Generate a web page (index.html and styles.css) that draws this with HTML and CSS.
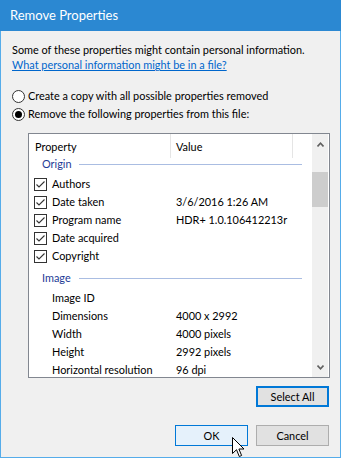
FILE: index.html
```html
<!DOCTYPE html>
<html lang="en">
<head>
<meta charset="utf-8">
<title>Remove Properties</title>
<link rel="stylesheet" href="styles.css">
</head>
<body>
<div class="window">
  <div class="titlebar">Remove Properties</div>
  <div class="content">
    <p class="intro">Some of these properties might contain personal information.</p>
    <a class="link" href="#">What personal information might be in a file?</a>
    <div class="options">
      <div class="radio-row"><span class="radio"></span><span>Create a copy with all possible properties removed</span></div>
      <div class="radio-row"><span class="radio"><span class="dot"></span></span><span>Remove the following properties from this file:</span></div>
    </div>
    <div class="listbox">
      <div class="list-main">
        <div class="list-header">
          <div class="col col-prop">Property</div>
          <div class="col col-val">Value</div>
          <div class="col col-fill"></div>
        </div>
        <div class="group group-first"><span class="group-name">Origin</span><span class="group-line"></span></div>
        <div class="row"><span class="cb"><svg viewBox="0 0 11 11" width="11" height="11"><polyline points="1.5,5.5 4,8 9.5,2.5" /></svg></span><span class="name">Authors</span><span class="val"></span></div>
        <div class="row"><span class="cb"><svg viewBox="0 0 11 11" width="11" height="11"><polyline points="1.5,5.5 4,8 9.5,2.5" /></svg></span><span class="name">Date taken</span><span class="val">3/6/2016 1:26 AM</span></div>
        <div class="row"><span class="cb"><svg viewBox="0 0 11 11" width="11" height="11"><polyline points="1.5,5.5 4,8 9.5,2.5" /></svg></span><span class="name">Program name</span><span class="val">HDR+ 1.0.106412213r</span></div>
        <div class="row"><span class="cb"><svg viewBox="0 0 11 11" width="11" height="11"><polyline points="1.5,5.5 4,8 9.5,2.5" /></svg></span><span class="name">Date acquired</span><span class="val"></span></div>
        <div class="row"><span class="cb"><svg viewBox="0 0 11 11" width="11" height="11"><polyline points="1.5,5.5 4,8 9.5,2.5" /></svg></span><span class="name">Copyright</span><span class="val"></span></div>
        <div class="group group-next"><span class="group-name">Image</span><span class="group-line"></span></div>
        <div class="row"><span class="cb-space"></span><span class="name">Image ID</span><span class="val"></span></div>
        <div class="row"><span class="cb-space"></span><span class="name">Dimensions</span><span class="val">4000 x 2992</span></div>
        <div class="row"><span class="cb-space"></span><span class="name">Width</span><span class="val">4000 pixels</span></div>
        <div class="row"><span class="cb-space"></span><span class="name">Height</span><span class="val">2992 pixels</span></div>
        <div class="row"><span class="cb-space"></span><span class="name">Horizontal resolution</span><span class="val">96 dpi</span></div>
      </div>
      <div class="scrollbar">
        <div class="arrow arrow-up"><svg viewBox="0 0 7 5" width="7" height="5"><polyline points="0.5,4.5 3.5,1.2 6.5,4.5" /></svg></div>
        <div class="track"><div class="thumb"></div></div>
        <div class="arrow arrow-down"><svg viewBox="0 0 7 5" width="7" height="5"><polyline points="0.5,0.5 3.5,3.8 6.5,0.5" /></svg></div>
      </div>
    </div>
    <div class="select-row"><button class="btn btn-default" type="button">Select All</button></div>
    <div class="actions">
      <button class="btn btn-hover" type="button">OK</button>
      <button class="btn" type="button">Cancel</button>
    </div>
  </div>
  <svg class="cursor" viewBox="0 0 13 21" width="13" height="21"><path d="M0.5 0.5 V16.5 L4.5 12.7 L7.3 19.5 L9.6 18.5 L6.9 12 H12 Z" /></svg>
</div>
</body>
</html>
```
FILE: styles.css
```css
body {
  margin: 0;
  background: #ffffff;
  font-family: Lato, "Liberation Sans", sans-serif;
  font-size: 10.9px;
  color: #000000;
}

.window {
  position: relative;
  width: 341px;
  height: 458px;
  box-sizing: border-box;
  border: 1px solid #55acea;
  border-top: 0;
  background: #f0f0f0;
  display: flex;
  flex-direction: column;
}

.titlebar {
  height: 31px;
  margin: 0 -1px;
  padding-left: 10px;
  background: #2b88d2;
  color: #ffffff;
  font-size: 13px;
  line-height: 30px;
}

.content {
  padding: 11px 11px 11px 11px;
  display: flex;
  flex-direction: column;
}

.intro {
  margin: 0;
  line-height: 15px;
}

.link {
  display: block;
  line-height: 15px;
  color: #0066cc;
  text-decoration: underline;
}

.options {
  margin-top: 15px;
}

.radio-row {
  display: flex;
  align-items: center;
  gap: 3px;
  height: 18px;
  line-height: 18px;
}

.radio {
  width: 13px;
  height: 13px;
  box-sizing: border-box;
  border: 1px solid #333333;
  border-radius: 50%;
  background: #ffffff;
  display: flex;
  align-items: center;
  justify-content: center;
}

.dot {
  width: 7px;
  height: 7px;
  border-radius: 50%;
  background: #000000;
}

.listbox {
  margin-top: 10px;
  margin-left: 16px;
  width: 302px;
  height: 245px;
  box-sizing: border-box;
  border: 1px solid #828790;
  background: #ffffff;
  display: flex;
}

.list-main {
  width: 283px;
  flex: none;
  overflow: hidden;
}

.list-header {
  display: flex;
  height: 24px;
}

.col {
  box-sizing: border-box;
  padding-top: 2px;
  line-height: 22px;
  border-right: 1px solid #e5e5e5;
  white-space: nowrap;
}

.col-prop {
  width: 142px;
  padding-left: 6px;
}

.col-val {
  width: 122px;
  padding-left: 5px;
}

.col-fill {
  flex: 1;
  border-right: 0;
}

.group {
  display: flex;
  align-items: center;
  height: 12px;
  line-height: 12px;
  padding-left: 13px;
  color: #1e3b96;
}

.group-first {
  padding-bottom: 5px;
}

.group-next {
  padding-top: 7px;
  padding-bottom: 5px;
}

.group-name {
  width: 37px;
  flex: none;
}

.group-line {
  flex: 1;
  height: 1px;
  margin-right: 10px;
  background: #aabde2;
}

.row {
  display: flex;
  align-items: center;
  height: 18px;
  line-height: 18px;
  padding-left: 5px;
  white-space: nowrap;
}

.cb {
  width: 13px;
  height: 13px;
  flex: none;
  box-sizing: border-box;
  border: 1px solid #333333;
  background: #ffffff;
  margin-right: 5px;
  display: flex;
}

.cb svg polyline {
  fill: none;
  stroke: #333333;
  stroke-width: 1.1;
}

.cb-space {
  width: 13px;
  height: 13px;
  flex: none;
  margin-right: 5px;
}

.name {
  width: 124px;
  flex: none;
}

.scrollbar {
  width: 16px;
  flex: none;
  background: #f0f0f0;
  display: flex;
  flex-direction: column;
}

.arrow {
  height: 20px;
  display: flex;
  align-items: center;
  justify-content: center;
}

.arrow svg polyline {
  fill: none;
  stroke: #606060;
  stroke-width: 1.6;
}

.track {
  flex: 1;
}

.thumb {
  margin-top: 18px;
  height: 35px;
  background: #cdcdcd;
}

.select-row {
  display: flex;
  justify-content: flex-end;
  margin-top: 8px;
}

.actions {
  display: flex;
  justify-content: flex-end;
  gap: 8px;
  margin-top: 18px;
}

.btn {
  width: 73px;
  height: 21px;
  box-sizing: border-box;
  padding: 0;
  border: 1px solid #adadad;
  background: #e1e1e1;
  font: inherit;
  color: #000000;
}

.btn-default {
  border: 2px solid #0078d7;
}

.btn-hover {
  background: #e5f1fb;
  border-color: #0078d7;
}

.cursor {
  position: absolute;
  left: 231px;
  top: 437px;
}

.cursor path {
  fill: #ffffff;
  stroke: #000000;
  stroke-width: 1;
  stroke-linejoin: miter;
}
```
